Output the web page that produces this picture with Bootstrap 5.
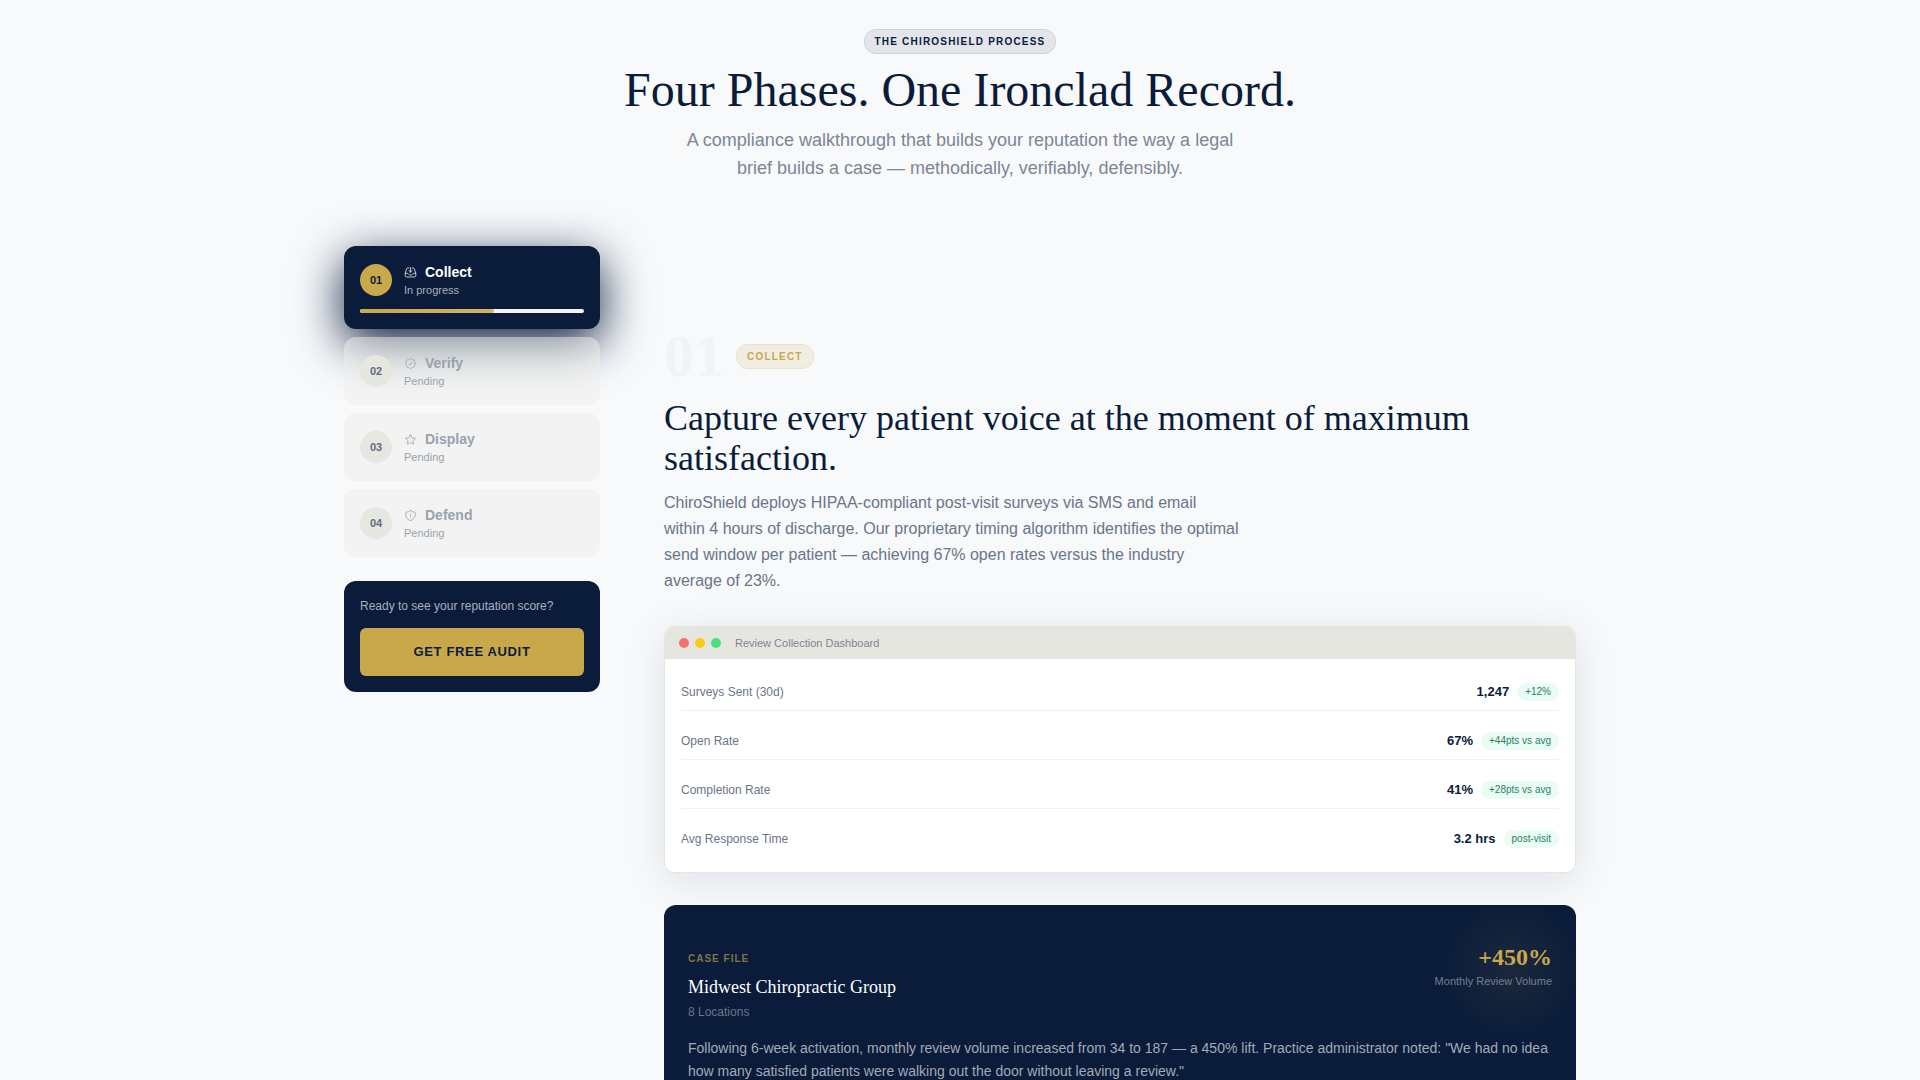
<!DOCTYPE html>
<html lang="en">
<head>
<meta charset="utf-8">
<meta name="viewport" content="width=device-width, initial-scale=1">
<title>The ChiroShield Process</title>
<link href="https://cdn.jsdelivr.net/npm/bootstrap@5.3.0/dist/css/bootstrap.min.css" rel="stylesheet">
<style>
  :root { --navy: #0a1c3a; --gold: #c8a84b; --slate: #6b7588; --stone: #e6e6e1; --paper: #f7f9fb; }
  body { background: var(--paper); color: var(--navy); font-family: "Liberation Sans", Arial, sans-serif; }
  .page-scroll { scrollbar-width: none; }
  .page-scroll::-webkit-scrollbar { display: none; }
  .serif { font-family: "Liberation Serif", "Times New Roman", serif; }
  .process-wrap { max-width: 1280px; padding: 29px 24px 64px; }
  .tag-pill { font-size: 10px; line-height: 15px; font-weight: 700; letter-spacing: .12em; padding: 4px 10px; border: 1px solid; border-radius: 12px; }
  .tag-navy { color: var(--navy); background: #e3e5ea; border-color: #ced2da; }
  .tag-gold { color: var(--gold); background: #f2ede2; border-color: #ebe1c6; }
  .hero-title { font-size: 48px; line-height: 52px; font-weight: 400; margin: 10px 0; }
  .hero-sub { font-size: 18px; line-height: 28px; color: #7d8695; max-width: 576px; margin-bottom: 64px; }
  .process-grid { gap: 64px; }
  .phase-rail { flex: 0 0 256px; }
  .phase-step { display: block; width: 100%; border: 0; border-radius: 12px; padding: 16px; text-align: left; background: rgba(238, 237, 234, .5); }
  .phase-step.current { background: var(--navy); box-shadow: 0 14px 48px var(--navy); }
  .phase-line { gap: 12px; }
  .phase-num { width: 32px; height: 32px; font-size: 11px; font-weight: 700; background: #e7e7e1; color: #5f6b7e; }
  .current .phase-num { background: var(--gold); color: var(--navy); }
  .phase-icon { width: 13px; height: 13px; fill: none; stroke: #9ba2ae; stroke-width: 1.5; stroke-linecap: round; stroke-linejoin: round; }
  .phase-name { font-size: 14px; line-height: 20px; font-weight: 700; color: #9aa2ae; }
  .phase-state { font-size: 11px; line-height: 16px; color: #9aa2ae; }
  .current .phase-icon { stroke: #e6e8ec; }
  .current .phase-name { color: #fff; }
  .current .phase-state { color: #a9b0bd; }
  .phase-bar { height: 4px; margin-top: 11px; background: #f3f3f1; border-radius: 4px; }
  .phase-bar .progress-bar { background: linear-gradient(90deg, #c8a84b, #d0b468); border-radius: 4px; }
  .audit-box { background: var(--navy); border-radius: 12px; padding: 16px; margin-top: 16px; }
  .audit-box p { font-size: 12px; line-height: 18px; color: #a9b0bd; margin-bottom: 13px; }
  .btn-gold, .btn-gold:hover { background: var(--gold); color: var(--navy); font-size: 13px; line-height: 20px; font-weight: 700; letter-spacing: .05em; border: 0; border-radius: 6px; padding: 14px; }
  .phase-detail { padding-top: 80px; }
  .ghost-num { font-size: 60px; line-height: 60px; font-weight: 700; color: #f1f3f4; }
  .detail-title { font-size: 36px; line-height: 40px; font-weight: 400; margin: 12px 0; }
  .detail-copy { font-size: 16px; line-height: 26px; color: var(--slate); max-width: 576px; margin-bottom: 32px; }
  .dash { background: #fff; border: 1px solid var(--stone); border-radius: 10px; overflow: hidden; box-shadow: 0 8px 40px rgba(10, 28, 58, .1); }
  .dash-top { background: var(--stone); padding: 8px 14px; gap: 6px; font-size: 11px; line-height: 16px; color: #7d8590; }
  .dot { width: 10px; height: 10px; border-radius: 50%; }
  .dash-body { padding: 15px 16px; gap: 12px; }
  .stat-row { padding: 8px 0; border-bottom: 1px solid #f1f1f1; }
  .stat-row:last-child { border-bottom: 0; }
  .stat-name { font-size: 12px; line-height: 20px; color: var(--slate); font-weight: 400; }
  .stat-val { font-size: 13px; line-height: 20px; font-weight: 700; }
  .stat-delta { font-size: 10px; line-height: 14px; color: #2b805f; background: #eafdf4; border-radius: 10px; padding: 2px 8px; }
  .case-file { background: radial-gradient(circle 72px at calc(100% - 64px) 64px, rgba(200, 168, 75, .09), rgba(200, 168, 75, 0)) var(--navy); border-radius: 12px; margin-top: 32px; padding: 40px 24px 24px; }
  .case-label { font-size: 10px; line-height: 15px; font-weight: 700; letter-spacing: .1em; color: #7f734a; margin: 6px 0 7px; }
  .case-name { font-size: 18px; line-height: 28px; font-weight: 400; color: #fff; margin: 0; }
  .case-meta { font-size: 12px; line-height: 18px; color: #6c7689; margin: 2px 0 0; }
  .case-gain { font-size: 24px; line-height: 24px; font-weight: 700; color: var(--gold); }
  .case-unit { font-size: 11px; line-height: 16px; color: #757e8e; margin-top: 4px; }
  .case-copy { font-size: 14px; line-height: 23px; color: #a3aab7; margin: 16px 0 0; }
</style>
</head>
<body>
<main class="page-scroll vh-100 overflow-auto">
  <div class="process-wrap container-fluid">
    <header class="d-flex flex-column align-items-center text-center">
      <span class="tag-pill tag-navy">THE CHIROSHIELD PROCESS</span>
      <h1 class="hero-title serif">Four Phases. One Ironclad Record.</h1>
      <p class="hero-sub">A compliance walkthrough that builds your reputation the way a legal brief builds a case — methodically, verifiably, defensibly.</p>
    </header>

    <div class="process-grid d-flex align-items-start">
      <aside class="phase-rail">
        <nav class="d-flex flex-column gap-2" aria-label="Phases">
          <button type="button" class="phase-step current">
            <span class="phase-line d-flex align-items-center">
              <span class="phase-num rounded-circle d-flex align-items-center justify-content-center">01</span>
              <span>
                <span class="d-flex align-items-center gap-2"><svg class="phase-icon" viewBox="0 0 24 24"><path d="M9 3.75H6.9a2.25 2.25 0 0 0-2.15 1.59L2.35 13.2c-.07.2-.1.43-.1.65V18a2.25 2.25 0 0 0 2.25 2.25h15A2.25 2.25 0 0 0 21.75 18v-4.15c0-.22-.03-.45-.1-.65l-2.41-7.86a2.25 2.25 0 0 0-2.15-1.59H15M2.25 13.5h3.86c.85 0 1.63.48 2.01 1.24l.26.52c.38.76 1.16 1.24 2.01 1.24h3.22c.85 0 1.63-.48 2.01-1.24l.26-.52a2.25 2.25 0 0 1 2.01-1.24h3.86M12 3v8.25m0 0-3-3m3 3 3-3"/></svg><span class="phase-name">Collect</span></span>
                <span class="phase-state d-block">In progress</span>
              </span>
            </span>
            <span class="phase-bar progress" role="progressbar" aria-label="Collect progress" aria-valuenow="60" aria-valuemin="0" aria-valuemax="100"><span class="progress-bar" style="width:60%"></span></span>
          </button>
          <button type="button" class="phase-step">
            <span class="phase-line d-flex align-items-center">
              <span class="phase-num rounded-circle d-flex align-items-center justify-content-center">02</span>
              <span>
                <span class="d-flex align-items-center gap-2"><svg class="phase-icon" viewBox="0 0 24 24"><path d="M9 12.75 11.25 15 15 9.75M21 12c0 1.27-.63 2.39-1.59 3.07a3.75 3.75 0 0 1-1.05 3.29 3.75 3.75 0 0 1-3.29 1.05A3.75 3.75 0 0 1 12 21a3.75 3.75 0 0 1-3.07-1.59 3.75 3.75 0 0 1-3.29-1.05 3.75 3.75 0 0 1-1.05-3.29A3.75 3.75 0 0 1 3 12c0-1.27.63-2.39 1.59-3.07a3.75 3.75 0 0 1 1.05-3.29 3.75 3.75 0 0 1 3.29-1.05A3.75 3.75 0 0 1 12 3c1.27 0 2.39.63 3.07 1.59a3.75 3.75 0 0 1 3.29 1.05 3.75 3.75 0 0 1 1.05 3.29A3.75 3.75 0 0 1 21 12Z"/></svg><span class="phase-name">Verify</span></span>
                <span class="phase-state d-block">Pending</span>
              </span>
            </span>
          </button>
          <button type="button" class="phase-step">
            <span class="phase-line d-flex align-items-center">
              <span class="phase-num rounded-circle d-flex align-items-center justify-content-center">03</span>
              <span>
                <span class="d-flex align-items-center gap-2"><svg class="phase-icon" viewBox="0 0 24 24"><path d="M11.48 3.5a.56.56 0 0 1 1.04 0l2.12 5.11a.56.56 0 0 0 .48.35l5.52.44c.5.04.7.66.32.99l-4.2 3.6a.56.56 0 0 0-.19.56l1.29 5.38a.56.56 0 0 1-.84.61l-4.73-2.88a.56.56 0 0 0-.58 0l-4.73 2.88a.56.56 0 0 1-.84-.61l1.29-5.38a.56.56 0 0 0-.19-.56l-4.2-3.6a.56.56 0 0 1 .32-.99l5.52-.44a.56.56 0 0 0 .48-.35l2.12-5.11Z"/></svg><span class="phase-name">Display</span></span>
                <span class="phase-state d-block">Pending</span>
              </span>
            </span>
          </button>
          <button type="button" class="phase-step">
            <span class="phase-line d-flex align-items-center">
              <span class="phase-num rounded-circle d-flex align-items-center justify-content-center">04</span>
              <span>
                <span class="d-flex align-items-center gap-2"><svg class="phase-icon" viewBox="0 0 24 24"><path d="M12 9v3.75M12 15.75h.01M12 2.71A11.96 11.96 0 0 1 3.6 6 11.99 11.99 0 0 0 3 9.75c0 5.59 3.82 10.29 9 11.62 5.18-1.33 9-6.03 9-11.62 0-1.31-.21-2.57-.6-3.75h-.15A11.96 11.96 0 0 1 12 2.71Z"/></svg><span class="phase-name">Defend</span></span>
                <span class="phase-state d-block">Pending</span>
              </span>
            </span>
          </button>
          <div class="audit-box">
            <p>Ready to see your reputation score?</p>
            <button type="button" class="btn btn-gold w-100">GET FREE AUDIT</button>
          </div>
        </nav>
      </aside>

      <section class="phase-detail flex-grow-1">
        <div class="phase-line d-flex align-items-center">
          <span class="ghost-num serif">01</span>
          <span class="tag-pill tag-gold">COLLECT</span>
        </div>
        <h2 class="detail-title serif">Capture every patient voice at the moment of maximum satisfaction.</h2>
        <p class="detail-copy">ChiroShield deploys HIPAA-compliant post-visit surveys via SMS and email within 4 hours of discharge. Our proprietary timing algorithm identifies the optimal send window per patient — achieving 67% open rates versus the industry average of 23%.</p>

        <div class="dash">
          <div class="dash-top d-flex align-items-center">
            <span class="dot" style="background:#f87171"></span>
            <span class="dot" style="background:#facc15"></span>
            <span class="dot" style="background:#4ade80"></span>
            <span class="ms-2">Review Collection Dashboard</span>
          </div>
          <dl class="dash-body d-flex flex-column mb-0">
            <div class="stat-row d-flex align-items-center justify-content-between"><dt class="stat-name">Surveys Sent (30d)</dt><dd class="d-flex align-items-center gap-2 mb-0"><span class="stat-val">1,247</span><span class="stat-delta">+12%</span></dd></div>
            <div class="stat-row d-flex align-items-center justify-content-between"><dt class="stat-name">Open Rate</dt><dd class="d-flex align-items-center gap-2 mb-0"><span class="stat-val">67%</span><span class="stat-delta">+44pts vs avg</span></dd></div>
            <div class="stat-row d-flex align-items-center justify-content-between"><dt class="stat-name">Completion Rate</dt><dd class="d-flex align-items-center gap-2 mb-0"><span class="stat-val">41%</span><span class="stat-delta">+28pts vs avg</span></dd></div>
            <div class="stat-row d-flex align-items-center justify-content-between"><dt class="stat-name">Avg Response Time</dt><dd class="d-flex align-items-center gap-2 mb-0"><span class="stat-val">3.2 hrs</span><span class="stat-delta">post-visit</span></dd></div>
          </dl>
        </div>

        <article class="case-file">
          <div class="d-flex justify-content-between align-items-start">
            <div>
              <p class="case-label">CASE FILE</p>
              <h3 class="case-name serif">Midwest Chiropractic Group</h3>
              <p class="case-meta">8 Locations</p>
            </div>
            <div class="text-end">
              <div class="case-gain serif">+450%</div>
              <div class="case-unit">Monthly Review Volume</div>
            </div>
          </div>
          <p class="case-copy">Following 6-week activation, monthly review volume increased from 34 to 187 — a 450% lift. Practice administrator noted: "We had no idea how many satisfied patients were walking out the door without leaving a review."</p>
        </article>
      </section>
    </div>
  </div>
</main>
<script src="https://cdn.jsdelivr.net/npm/bootstrap@5.3.0/dist/js/bootstrap.bundle.min.js"></script>
</body>
</html>
